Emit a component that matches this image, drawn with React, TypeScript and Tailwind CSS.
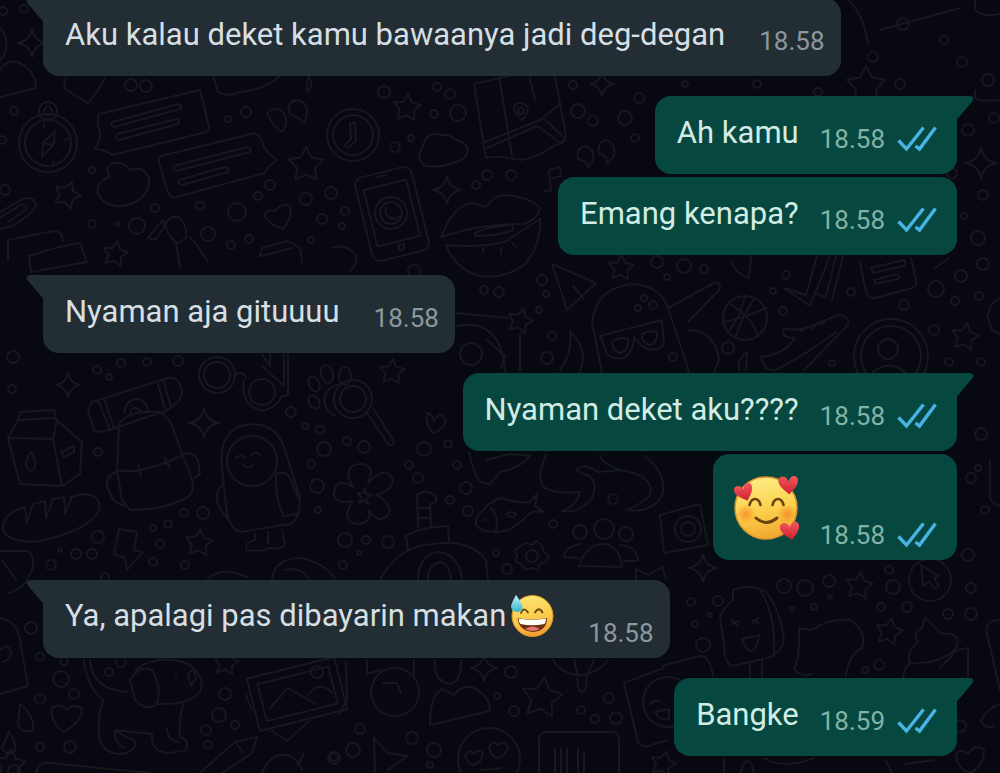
import type { ReactNode } from "react";
import clsx from "clsx";

interface Message {
  from: "me" | "them";
  content: ReactNode;
  time: string;
  tail?: boolean;
  hasEmoji?: boolean;
}

// [cx, cy, r]
const bubbles = [
  [3, 11, 4], [24, 9, 4], [14, 111, 4], [2, 140, 4], [131, 85, 6], [146, 86, 6], [92, 170, 3], [5, 190, 5],
  [228, 119, 3], [246, 112, 5], [155, 208, 4], [200, 206, 4], [237, 212, 9], [258, 196, 4], [270, 185, 5],
  [306, 199, 6], [331, 193, 6], [322, 219, 5], [92, 224, 4], [137, 226, 8], [208, 234, 7], [231, 245, 4], [249, 239, 4],
  [118, 224, 2], [311, 240, 3], [384, 92, 6], [437, 87, 4], [450, 94, 5], [434, 114, 4], [458, 113, 8], [395, 147, 5],
  [411, 138, 3], [487, 175, 5], [511, 175, 5], [476, 185, 4], [573, 85, 4], [578, 111, 7], [593, 121, 5], [625, 118, 7],
  [639, 98, 5], [635, 138, 4], [345, 211, 4], [342, 226, 3], [414, 271, 6], [484, 290, 4], [499, 292, 5], [542, 280, 5],
  [546, 294, 3], [539, 310, 3], [552, 336, 4], [547, 358, 6], [644, 298, 3], [653, 305, 4], [638, 308, 3], [684, 266, 7],
  [704, 269, 4], [667, 277, 3], [657, 262, 6], [673, 357, 4], [728, 348, 6], [783, 311, 4], [786, 275, 4], [773, 291, 3],
  [851, 292, 4], [904, 305, 5], [936, 289, 8], [955, 301, 4], [961, 276, 6], [979, 296, 4], [983, 264, 6], [934, 330, 5],
  [949, 362, 4], [981, 362, 4], [832, 363, 3], [13, 357, 6], [12, 389, 4], [97, 370, 4], [109, 377, 3], [121, 363, 4],
  [147, 362, 4], [178, 361, 5], [98, 452, 4], [291, 412, 5], [305, 426, 3], [320, 430, 4], [324, 449, 7], [311, 464, 4],
  [317, 486, 7], [318, 510, 3], [184, 513, 4], [203, 513, 6], [153, 528, 3], [168, 524, 4], [160, 544, 4], [153, 562, 4],
  [185, 565, 4], [98, 537, 6], [76, 554, 5], [92, 554, 5], [51, 565, 5], [105, 577, 4], [60, 550, 2], [347, 441, 4],
  [364, 447, 6], [424, 449, 7], [448, 444, 4], [409, 465, 4], [457, 465, 4], [418, 478, 5], [466, 488, 6], [450, 500, 4],
  [468, 511, 5], [345, 540, 7], [366, 540, 4], [388, 542, 6], [343, 565, 4], [359, 553, 2], [496, 553, 3], [507, 569, 5],
  [553, 524, 4], [613, 499, 5], [968, 130, 6], [994, 118, 5], [983, 195, 5], [964, 216, 3], [978, 238, 7], [952, 173, 5],
  [685, 84, 3], [757, 84, 4], [818, 92, 4], [900, 84, 5], [903, 24, 6], [944, 40, 4], [962, 62, 5], [873, 57, 5],
  [988, 80, 6], [981, 434, 6], [971, 478, 5], [985, 510, 4], [968, 555, 6], [978, 468, 3],
  [691, 602, 4], [718, 601, 5], [695, 624, 3], [710, 615, 2], [703, 645, 7], [784, 586, 7], [805, 588, 8], [829, 581, 6],
  [814, 607, 3], [792, 609, 2], [830, 597, 2], [889, 570, 4], [893, 587, 7], [881, 607, 4], [907, 607, 5], [948, 614, 5],
  [971, 614, 6], [971, 588, 5], [879, 665, 5], [865, 670, 3], [960, 726, 6], [61, 679, 8], [40, 657, 4], [64, 661, 4],
  [31, 628, 6], [74, 694, 5], [40, 699, 5], [40, 747, 4], [70, 747, 6], [14, 771, 6], [109, 672, 4], [121, 662, 5],
  [225, 694, 6], [219, 715, 7], [235, 725, 4], [206, 730, 5], [208, 745, 4], [334, 758, 6], [360, 729, 5], [412, 738, 6],
  [434, 750, 7], [353, 750, 7], [334, 757, 4], [430, 765, 3], [511, 672, 6], [497, 696, 3], [514, 711, 5], [581, 710, 4],
  [595, 719, 4], [609, 698, 5], [616, 718, 6],
];

// [cx, cy, r, rotation in degrees]
const stars = [
  [306, 165, 18, 0], [67, 195, 14, 20], [115, 254, 13, 10], [407, 108, 14, 5], [621, 268, 13, 4], [520, 321, 13, 15],
  [965, 337, 14, 10], [199, 543, 14, 5], [226, 663, 13, 8], [542, 698, 21, 8], [859, 586, 14, 8], [889, 632, 14, 12],
  [866, 86, 20, 0], [392, 372, 13, 4], [663, 764, 13, 15], [10, 765, 16, 5],
];

// [cx, cy, r]
const sparkles = [
  [32, 43, 14], [447, 190, 14], [602, 84, 12], [981, 163, 16], [68, 385, 12], [204, 423, 15], [703, 568, 14], [484, 668, 13],
];

function starPoints(cx: number, cy: number, r: number, rotation: number) {
  return Array.from({ length: 10 }, (_, i) => {
    const angle = ((i * 36 - 90 + rotation) * Math.PI) / 180;
    const radius = i % 2 ? r * 0.52 : r;
    return `${(cx + radius * Math.cos(angle)).toFixed(1)},${(cy + radius * Math.sin(angle)).toFixed(1)}`;
  }).join(" ");
}

function Wallpaper() {
  return (
    <svg
      className="absolute inset-0 w-full h-full"
      viewBox="0 0 1000 773"
      preserveAspectRatio="xMidYMin slice"
      fill="none"
      stroke="#17181e"
      strokeWidth="2"
      strokeLinecap="round"
      strokeLinejoin="round"
      aria-hidden="true"
    >
      {bubbles.map(([cx, cy, r], i) => (
        <circle key={i} cx={cx} cy={cy} r={r} />
      ))}
      {stars.map(([cx, cy, r, rotation], i) => (
        <polygon key={i} points={starPoints(cx, cy, r, rotation)} />
      ))}
      {sparkles.map(([x, y, r], i) => (
        <path
          key={i}
          d={`M${x} ${y - r}Q${x + 2} ${y - 2} ${x + r} ${y}Q${x + 2} ${y + 2} ${x} ${y + r}Q${x - 2} ${y + 2} ${x - r} ${y}Q${x - 2} ${y - 2} ${x} ${y - r}Z`}
        />
      ))}

      {/* compass */}
      <circle cx="48" cy="143" r="29" />
      <circle cx="48" cy="143" r="23" />
      <circle cx="48" cy="111" r="9" />
      <circle cx="48" cy="111" r="4" />
      <path d="M55 131l-1 13-12 13 1-14zM43 143l10 2M44 124v3M64 140l4-1M53 162v4" />
      {/* cap and tag */}
      <path d="M0 70Q8 58 20 63Q36 72 36 88L0 97M0 28Q8 36 6 50Q4 57 0 60M66 76L64 88Q75 96 88 103Q98 92 105 78" />
      {/* speech cards */}
      <path d="M99 114L200 90Q203 100 209 128Q208 132 203 133L112 155Q105 149 95 149Q101 140 100 132Q96 122 99 114Z" />
      <path d="M112 122L179 104q4 2 1 5L114 127q-4-1-2-5ZM117 134L177 119q4 2 1 5L119 140q-4-1-2-6Z" />
      <path d="M161 156L255 133Q262 137 264 148Q270 155 277 160Q266 168 265 173L176 197Q170 198 168 192L159 163Q158 158 161 156Z" />
      <path d="M174 166L247 147q5 1 3 5L176 171q-4-1-2-5ZM179 180L225 167q5 1 3 5L182 185q-5-1-3-5Z" />
      {/* clouds */}
      <path d="M110 177Q104 168 113 163Q124 161 130 170Q143 165 149 178Q150 194 135 202Q118 211 103 201Q94 192 100 183Q105 178 110 177Z" />
      <path d="M424 143Q428 131 441 135Q450 134 454 139Q466 142 468 150Q467 160 453 163Q440 168 425 166Q416 159 421 150Z" />
      {/* quotes */}
      <path d="M282 132Q275 128 267 114Q271 107 280 110Q289 116 285 127ZM304 123Q301 119 290 114Q286 104 295 100Q306 100 307 111Q307 117 304 123ZM588 168Q588 161 578 159Q575 149 585 146Q595 148 593 160ZM607 164Q608 156 599 153Q597 142 606 140Q616 143 614 156Z" />
      {/* clock */}
      <circle cx="353" cy="135" r="26" />
      <circle cx="353" cy="135" r="20" />
      <path d="M350 123h5l1 18-8 7-3-3 6-6z" />
      {/* paperclip and envelope */}
      <path d="M0 212L25 198Q35 197 36 206Q30 216 12 226L0 229M0 218L22 204Q28 205 26 210L8 222M8 260V240Q30 235 55 231Q62 231 63 241M29 256Q55 247 80 243L87 262L31 272Z" />
      {/* bottle, heart, box */}
      <path d="M148 238l15-18 2 6-10 14zM165 224Q170 214 180 218Q188 228 186 238L178 243Q168 238 165 224ZM176 243L180 268M190 237Q200 248 208 262M265 217Q264 209 275 211Q283 202 290 206Q293 218 283 229Q272 226 265 217ZM260 256l2-8 26-7 12 7 2 14M262 256l30-8" />
      {/* map */}
      <path d="M474 84L553 66L566 136Q565 143 555 145Q535 159 520 160Q500 155 486 158ZM498 70L512 156M528 70L535 100M485 142L540 120L560 104M487 148L537 126L562 144M543 118L565 138" />
      <path d="M522 120Q512 112 515 105Q521 100 527 106Q530 112 522 120Z" />
      <circle cx="521" cy="111" r="3" />
      {/* phone */}
      <rect x="363" y="171" width="58" height="86" rx="8" transform="rotate(-14 392 214)" />
      <rect x="370" y="184" width="44" height="58" transform="rotate(-14 392 214)" />
      <circle cx="391" cy="213" r="16" />
      <circle cx="391" cy="213" r="11" />
      <path d="M386 207q-3 11 10 12l3-3M377 177l9-2M399 250l5-1v-5l-5 1z" />
      {/* lips */}
      <path d="M441 237Q454 205 472 203Q478 204 486 207Q494 195 506 195Q530 197 540 208Q538 220 522 224Q478 224 441 237ZM446 245Q480 248 505 242Q520 232 540 219Q541 246 525 264Q506 279 481 276Q455 270 446 245ZM475 233q14-7 38-8v5q-14 6-38 6zM483 253v-5M501 254v-6M516 247l-4-5" />
      {/* music note, balloon */}
      <path d="M544 192q5-4 7 0l-2-22 11-3 1 9-8 2M333 248Q345 243 356 255Q357 265 350 271M347 64Q350 73 358 73Q366 70 367 76M213 76L218 92Q230 98 240 92Q265 90 280 76M308 76q6 6 1 15-5 0 0-15" />
      {/* party cone */}
      <path d="M552 264L596 283L567 310ZM573 286l11 13" />
      {/* wand and vinyl */}
      <path d="M456 313L508 318M520 334V370M456 326Q485 320 498 342Q505 355 505 372M487 340l18 16-4 12M570 331Q590 350 579 374M570 331Q573 352 560 370" />
      <circle cx="471" cy="354" r="11" />
      {/* person with glasses */}
      <path d="M602 372L592 322Q596 288 632 284Q660 285 668 308L689 372M600 336L662 320L664 345Q656 352 645 348Q637 342 634 336Q634 352 624 358Q612 360 607 353ZM612 342q8-6 16-3 1 12-8 14-8-3-8-11ZM642 334q8-4 15-2 1 11-8 13-8-3-7-11ZM668 308L716 282q6 2 3 8L688 322M688 330Q715 330 719 360L714 372" />
      {/* basketball */}
      <circle cx="745" cy="318" r="22" />
      <path d="M729 303Q755 320 758 337M745 296Q737 325 727 332M724 322Q745 318 766 308M735 338Q742 318 753 300" />
      {/* checks and card */}
      <path d="M817 256L806 295 784 288 810 306 830 256M836 256L826 297 816 294M843 256L832 300M860 262L866 292Q868 299 875 298L912 288Q918 286 916 280L911 258M871 268l33-8q3 2 0 6l-31 7zM874 280l23-6q3 2 1 5l-22 5zM935 268l14-10M732 262Q735 274 749 278L751 256" />
      {/* sneaker */}
      <path d="M761 357Q785 354 795 338Q780 338 784 328Q795 332 812 326L838 315Q850 315 848 325L804 370M761 357Q764 372 776 370Q805 355 836 332M801 331l4-3M811 329l4-3M821 325l4-3M739 370q-2-12 8-18l-1 18" />
      {/* badge */}
      <circle cx="891" cy="356" r="37" />
      <circle cx="891" cy="356" r="30" />
      <circle cx="888" cy="349" r="10" />
      <path d="M873 372q18-14 34 2M1000 298l-8 6-5 12 5 14 8 4" />
      {/* milk carton */}
      <path d="M18 420L54 418L82 442L80 474L62 486L20 484L8 438ZM18 420L20 412 54 410 56 420M8 438L53 439L62 486M53 439L57 420M31 452q9 14 0 19-10-6 0-19M61 452l13-6v6l-10 5z" />
      {/* bread */}
      <path d="M25 507Q2 513 3 530Q10 544 40 541Q90 530 99 510Q102 496 85 494L70 497M25 507L27 523 33 504 45 501 46 518 53 499 64 497 65 514 72 497M0 551H28Q36 558 32 570Q24 590 8 593M2 560l14 20" />
      {/* backpack */}
      <path d="M92 402L168 378Q180 376 182 392Q182 402 165 411L112 429Q96 434 94 430L88 410ZM98 400l12 30M104 398l10 30M157 381l8 28M163 379l8 28M124 413q2-13 12-14 11 1 12 12M130 413q5-10 12 0" />
      <path d="M119 425Q126 410 160 412Q168 417 172 426L191 477Q196 490 188 497Q162 511 130 510L122 500L117 470ZM117 470Q140 475 181 456M119 471Q106 474 107 486L113 500L124 506M183 455Q192 449 198 461L200 474 194 478M138 464l3 12M165 458l5 10" />
      {/* headphones */}
      <circle cx="217" cy="375" r="18" />
      <circle cx="217" cy="375" r="13" />
      <circle cx="262" cy="392" r="13" />
      <path d="M234 377q6-8 12 0M244 380Q240 405 262 411Q276 408 282 396L288 395V354M284 354V386L262 366M262 354l8 12V354" />
      {/* paw and magnifier */}
      <ellipse cx="314" cy="384" rx="5" ry="8" transform="rotate(-25 314 384)" />
      <ellipse cx="327" cy="374" rx="6" ry="9" transform="rotate(-15 327 374)" />
      <ellipse cx="314" cy="402" rx="5" ry="7" transform="rotate(-35 314 402)" />
      <ellipse cx="345" cy="376" rx="6" ry="9" />
      <path d="M325 395Q330 384 344 384M325 395Q322 410 335 416" />
      <circle cx="353" cy="399" r="19" />
      <circle cx="353" cy="399" r="13" />
      <path d="M367 413L388 444q6 3 6-3L373 408M427 413q6 2 7 8 6-11 12-1-2 9-12 13-9-6-7-20" />
      {/* mascot in a parka */}
      <path d="M222 470Q218 430 245 425Q276 420 285 450L300 498Q300 520 290 524L240 532Q228 528 226 505ZM224 484Q213 490 219 508L230 522M276 474q10-4 14 4l10 24-2 12-14 2Q275 500 276 474ZM255 534v6q-12 3-8 10 16 2 22-2 14 2 16-4l-3-14M268 532v12M236 458q5-5 9 0M251 455q5-5 9 0M243 465q6 6 11-1" />
      <circle cx="252" cy="461" r="25" />
      {/* lightning */}
      <path d="M119 529L137 532 134 550 143 552 127 570 125 558 114 554ZM207 580q12-15 40-3M272 580q2-22 30-22 24 6 34 22M285 570q15-4 25 10" />
      {/* flower */}
      <path d="M349 479Q345 464 362 464Q376 466 368 483Q385 465 392 478Q395 490 376 495Q394 505 388 515Q378 525 369 510Q372 524 356 524Q340 520 353 501Q333 505 334 492Q337 477 353 487Z" />
      <path d="M365 488l1 6 6 1-5 3 1 6-4-4-5 3 2-6-4-4h6z" />
      {/* telephone */}
      <path d="M380 580Q395 550 425 545Q470 537 486 560L488 580M408 550L406 536Q420 527 448 526L449 542M418 528L417 495Q425 488 436 496Q437 505 430 504L431 526M417 508h13M418 518h12" />
      <path d="M418 580Q418 554 440 552Q460 556 462 580M428 580q0-16 12-18 10 2 11 18" />
      {/* fish and shark */}
      <path d="M476 519Q488 501 501 498Q520 504 530 502L537 494L535 506L544 512Q530 510 525 518Q510 532 498 532Q480 532 476 525ZM491 508q8 8 5 22M484 520h2M506 514q6-4 10 0-4 6-10 0M469 452Q474 474 480 482L490 484 500 472Q520 468 530 456L510 454 486 460" />
      <path d="M546 455Q535 480 545 488Q556 494 580 492Q577 506 562 511Q580 514 592 498Q598 485 590 476Q580 473 576 470Q584 462 598 472L620 470Q600 462 600 455M620 470Q655 475 650 495Q640 506 626 510Q650 514 662 496Q668 475 645 456" />
      {/* gear */}
      <path d="M526 543l6 2 4-4 6 4 2 7 5 4-3 6-6 2-2 6-7-2-5 2-5-6-5-2 1-7-3-4 5-4z" />
      <circle cx="532" cy="556" r="6" />
      {/* people */}
      <circle cx="604" cy="529" r="10" />
      <circle cx="580" cy="532" r="7" />
      <circle cx="626" cy="534" r="7" />
      <path d="M579 566Q586 544 604 544Q620 546 622 567ZM581 544Q565 546 564 557L578 558M620 545Q637 546 638 561L624 561" />
      {/* camera */}
      <path d="M660 515L700 504 708 545 664 553ZM636 579v-10l12 6 14-8 4 12" />
      <circle cx="688" cy="529" r="13" />
      <circle cx="688" cy="529" r="7" />
      {/* ice cream bar */}
      <path d="M733 590Q750 583 766 592Q780 610 784 640Q782 652 768 658L732 666Q724 662 724 645L720 617Q726 604 733 600ZM760 590Q776 615 774 656M750 664v14M762 661v16M732 624l7-3M732 620l6 6M752 620l7 3M753 624l5-6M742 639l17-4q-2 16-9 16-6-4-8-12" />
      {/* cat, cupcake, cursor */}
      <path d="M799 628Q800 660 794 668Q800 678 812 674M799 628L812 630Q830 618 850 620Q868 632 862 648Q848 655 846 676M903 678Q904 668 910 663Q906 652 918 642Q912 634 922 628L925 618L942 634Q960 632 957 645Q955 655 930 662L908 664M957 650L968 648V678M957 650L940 668M921 565l2 21 6-5 6 8 4-3-5-8 5-2z" />
      <circle cx="930" cy="580" r="21" />
      <path d="M1000 620Q984 620 987 634L1000 690M1000 704Q988 708 981 720Q984 730 994 726M956 756Q958 747 968 754Q976 743 984 750Q984 764 971 773Q958 770 956 756M990 460v38q2 6 10 8M975 0v8q4 10 25 6M975 90v7q1 5 25 3" />
      {/* puppy */}
      <path d="M84 660Q86 685 103 700Q96 722 100 740Q106 757 127 753Q140 746 134 740L124 736 115 730Q113 742 124 748M90 660Q92 690 128 692M115 730L152 734Q150 752 170 753L186 750Q190 740 180 737Q178 720 184 702M167 728q0 12 12 14M130 680Q140 664 152 670Q163 690 156 705Q145 711 135 700ZM135 670Q160 652 190 665Q206 678 200 692Q190 705 158 704M188 674l6-6 2 10-5 8zM176 674v2" />
      {/* heart and drops */}
      <path d="M52 715Q50 704 61 706L67 710Q72 703 82 708Q82 722 64 732Q54 726 52 715ZM20 704Q35 716 33 730Q22 735 18 724ZM9 732Q18 745 14 752Q6 756 2 748ZM0 618Q18 622 20 640L28 686 0 694M0 650q8-8 11 2 0 8-9 10" />
      {/* framed photos */}
      <rect x="252" y="667" width="90" height="54" transform="rotate(-14 297 694)" />
      <rect x="261" y="675" width="73" height="38" transform="rotate(-14 297 694)" />
      <circle cx="317" cy="672" r="6" />
      <path d="M270 708L288 688 316 704M308 695q12-16 24-2M246 695l6 15M272 731l15 10 22-20M346 662l1 38 -8 14" />
      {/* pencil and apple */}
      <path d="M200 773L235 742 257 737 252 753 222 773M235 742l8 10M262 773Q272 750 290 756Q300 762 302 770M298 765l6-12M36 773q2-12 14-10L150 773" />
      {/* watch, person */}
      <circle cx="395" cy="692" r="24" />
      <path d="M383 683h14l4 10M367 660v14l14-4M414 660v14M435 660q-2 20 14 24 13-2 12-24M430 725Q430 695 442 689L454 695Q462 684 474 688Q490 696 490 711Z" />
      {/* parachute, sticker frames */}
      <path d="M553 660Q562 675 582 675Q600 672 608 660M578 675q-2 16 4 17 6-2 4-17M574 660l4 16M594 660l-7 15M624 683L664 668M624 683L638 742Q640 747 648 746L668 740" />
      <circle cx="668" cy="702" r="25" />
      <path d="M650 704q5-6 10-2M655 712l14-3v10q-11 2-14-7M375 773L374 738 388 753 407 756 388 770" />
      <circle cx="489" cy="759" r="31" />
      <path d="M465 756q5-8 9-2 5-6 9-1-2 12-11 12-5-3-7-9M489 747q5-8 9-2 7-5 10 2-3 10-12 11-6-3-7-11M481 770l20-2" />
      <rect x="539" y="732" width="80" height="60" rx="7" />
      <path d="M555 773v-25M561 773v-25M567 773v-25M578 773v-25M584 773v-20M724 773V758M740 773q8-24 14 0M764 758q20 12 50 0M892 773l-6-12M905 764l30-4" />
      <path d="M662 666L700 656Q710 656 713 676M848 0q16 14 20 44M880 30L960 8" />
    </svg>
  );
}

function HeartsFace() {
  const heart = "M0 4C-4-4-13-1-11 6C-9 12-1 15 3 18C6 13 12 7 10 0C8-5 1-4 0 4Z";
  return (
    <svg className="w-16 h-16 shrink-0 overflow-visible" viewBox="0 0 64 64" role="img" aria-label="smiling face with hearts">
      <defs>
        <linearGradient id="hearts-face" x1="0.4" y1="0" x2="0.6" y2="1">
          <stop offset="0" stopColor="#fdec82" />
          <stop offset="0.55" stopColor="#fbd04b" />
          <stop offset="1" stopColor="#f2a52e" />
        </linearGradient>
        <radialGradient id="hearts-blush">
          <stop offset="0" stopColor="#f38420" stopOpacity="0.75" />
          <stop offset="1" stopColor="#f38420" stopOpacity="0" />
        </radialGradient>
        <linearGradient id="heart" x1="0" y1="0" x2="0" y2="1">
          <stop offset="0" stopColor="#f4585f" />
          <stop offset="1" stopColor="#cf2030" />
        </linearGradient>
      </defs>
      <circle cx="31" cy="32" r="31" fill="url(#hearts-face)" stroke="#dd922c" strokeWidth="1.5" />
      <circle cx="11" cy="38" r="10" fill="url(#hearts-blush)" />
      <circle cx="52" cy="38" r="10" fill="url(#hearts-blush)" />
      <g fill="none" stroke="#6b4311" strokeLinecap="round">
        <path d="M14.500 29Q16 23 20 23Q24 23 25.500 29" strokeWidth="2.600" />
        <path d="M37.500 29Q39 23 43 23Q47 23 48.500 29" strokeWidth="2.600" />
        <path d="M21 42Q31 51 42 42" strokeWidth="3" />
      </g>
      <path d={heart} fill="url(#heart)" transform="translate(8 10) scale(.85) rotate(-8)" />
      <path d={heart} fill="url(#heart)" transform="translate(54 2) scale(.9) rotate(8)" />
      <path d={heart} fill="url(#heart)" transform="translate(55 48) scale(.88) rotate(2)" />
    </svg>
  );
}

function SweatFace() {
  return (
    <svg className="w-11 h-11 shrink-0" viewBox="0 0 44 44" role="img" aria-label="grinning face with sweat">
      <defs>
        <linearGradient id="sweat-face" x1="0.4" y1="0" x2="0.6" y2="1">
          <stop offset="0" stopColor="#fde573" />
          <stop offset="0.6" stopColor="#fbc846" />
          <stop offset="1" stopColor="#f09a2c" />
        </linearGradient>
        <linearGradient id="sweat-drop" x1="0" y1="0" x2="0" y2="1">
          <stop offset="0" stopColor="#c5f1f7" />
          <stop offset="1" stopColor="#2fb4d0" />
        </linearGradient>
      </defs>
      <circle cx="22.500" cy="22" r="20.500" fill="url(#sweat-face)" stroke="#df932c" />
      <g fill="none" stroke="#6b4311" strokeWidth="1.800" strokeLinecap="round">
        <path d="M11 19Q14 12 18 18.500" />
        <path d="M25 18.500Q29 12 32.500 18.500" />
      </g>
      <path d="M7.500 24Q22 27 37 24Q37 37 23 38Q9 37 7.500 24Z" fill="#6d2e12" />
      <path d="M8.500 24.500Q22 27 36 24.500Q36 28 34.500 30Q22 32.500 10.500 30Q8.500 28 8.500 24.500Z" fill="#fffdf6" />
      <path d="M15 35Q22 30 30 35Q23 39 15 35Z" fill="#e5736a" />
      <path d="M6 1Q12 9 12.500 13Q12 18 6.500 18Q1 17 1 12Q2 8 6 1Z" fill="url(#sweat-drop)" />
    </svg>
  );
}

function ReadTicks() {
  return (
    <svg
      className="w-10 h-[26px] mb-[2px] ml-3 shrink-0"
      viewBox="0 0 40 26"
      fill="none"
      stroke="#49b3e4"
      strokeWidth="3.4"
      role="img"
      aria-label="Read"
    >
      <path d="M1.500 14.500L9.500 23L26.500 1.500" />
      <path d="M18.500 20L22.500 23L38.500 1.500" />
    </svg>
  );
}

function Tail({ side }: { side: "left" | "right" }) {
  return (
    <svg
      className={clsx(
        "absolute top-0 w-[18px] h-6",
        side === "left" ? "right-full -mr-px text-[#222e34]" : "left-full -ml-px text-[#06483f] -scale-x-100"
      )}
      viewBox="0 0 18 24"
      fill="currentColor"
      aria-hidden="true"
    >
      <path d="M18 0H4Q-1 1 1.500 5L14 20Q17 23 18 24Z" />
    </svg>
  );
}

function Bubble({ message }: { message: Message }) {
  const { from, content, time, tail, hasEmoji } = message;
  const mine = from === "me";

  return (
    <li
      className={clsx(
        "relative flex items-end min-h-[78px] max-w-[95%] rounded-[16px]",
        hasEmoji ? "pb-[10px]" : "pb-5",
        mine ? "self-end bg-[#06483f] pl-[22px] pr-5" : "self-start bg-[#222e34] pl-[22px] pr-4",
        tail && (mine ? "rounded-tr-none" : "rounded-tl-none")
      )}
    >
      {tail && <Tail side={mine ? "right" : "left"} />}
      <div
        className={clsx(
          "flex items-center text-[31px] leading-9",
          hasEmoji ? "pb-[10px]" : "pb-[3px]",
          mine ? "text-[#d2ece5]" : "text-[#d6dfe3]"
        )}
      >
        {content}
      </div>
      <time
        className={clsx(
          "text-[26px] leading-[30px] whitespace-nowrap",
          mine ? "ml-[21px] text-[#83b2a6]" : "ml-[34px] text-[#8c989e]"
        )}
      >
        {time}
      </time>
      {mine && <ReadTicks />}
    </li>
  );
}

const groups: Message[][] = [
  [{ from: "them", content: "Aku kalau deket kamu bawaanya jadi deg-degan", time: "18.58", tail: true }],
  [
    { from: "me", content: "Ah kamu", time: "18.58", tail: true },
    { from: "me", content: "Emang kenapa?", time: "18.58" },
  ],
  [{ from: "them", content: "Nyaman aja gituuuu", time: "18.58", tail: true }],
  [
    { from: "me", content: "Nyaman deket aku????", time: "18.58", tail: true },
    {
      from: "me",
      content: (
        <span className="pt-[22px]">
          <HeartsFace />
        </span>
      ),
      time: "18.58",
      hasEmoji: true,
    },
  ],
  [
    {
      from: "them",
      content: (
        <span className="flex items-center gap-1">
          Ya, apalagi pas dibayarin makan
          <SweatFace />
        </span>
      ),
      time: "18.58",
      tail: true,
      hasEmoji: true,
    },
  ],
  [{ from: "me", content: "Bangke", time: "18.59", tail: true }],
];

export default function App() {
  return (
    <main className="relative min-h-screen overflow-hidden bg-[#070810] font-[Roboto,sans-serif]">
      <Wallpaper />
      <div className="relative flex flex-col gap-5 -mt-[2px] px-[43px] pb-4">
        {groups.map((group, i) => (
          <ul key={i} className="flex flex-col gap-[3px]">
            {group.map((message, j) => (
              <Bubble key={j} message={message} />
            ))}
          </ul>
        ))}
      </div>
    </main>
  );
}
